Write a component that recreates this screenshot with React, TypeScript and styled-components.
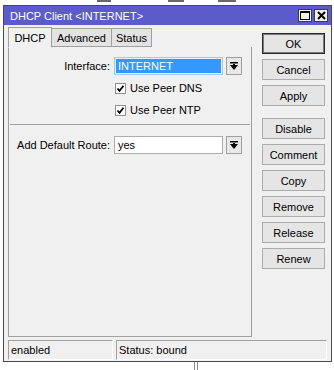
import styled, { createGlobalStyle } from "styled-components";

const GlobalStyle = createGlobalStyle`
  html, body {
    margin: 0;
    padding: 0;
    background: #ffffff;
  }
  body {
    font-family: "Liberation Sans", Arial, sans-serif;
    font-size: 11px;
    color: #000;
  }
`;

const Page = styled.div`
  width: 334px;
  height: 370px;
  padding: 0 2px 0 3px;
  box-sizing: border-box;
  overflow: hidden;
`;

// fragments of the grid behind the window
const BackStrip = styled.div`
  height: 5px;
  display: flex;
  align-items: flex-start;
`;

const BackMark = styled.div<{ $left: number; $w: number }>`
  margin-left: ${(p) => p.$left}px;
  width: ${(p) => p.$w}px;
  height: 2px;
  background: #6a6a6a;
`;

const Window = styled.div`
  width: 329px;
  height: 357px;
  box-sizing: border-box;
  border: 1px solid #4a4a4a;
  background: #f0f0f0;
  display: flex;
  flex-direction: column;
`;

const TitleBar = styled.div`
  height: 19px;
  flex: none;
  background: #5b5bc9;
  color: #fff;
  display: flex;
  align-items: center;
  padding: 0 3px 0 6px;
  font-size: 11px;
`;

const Title = styled.div`
  flex: 1;
`;

const TitleButtons = styled.div`
  display: flex;
  gap: 2px;
`;

const TitleButton = styled.div`
  width: 14px;
  height: 13px;
  box-sizing: border-box;
  background: #f0f0f0;
  border: 1px solid #3c3c3c;
  display: flex;
  align-items: center;
  justify-content: center;
`;

const Main = styled.div`
  height: 312px;
  flex: none;
  display: flex;
  padding: 3px 6px 0 4px;
  box-sizing: border-box;
  gap: 10px;
`;

const LeftColumn = styled.div`
  width: 244px;
  display: flex;
  flex-direction: column;
`;

const TabRow = styled.div`
  height: 19px;
  display: flex;
  align-items: flex-end;
  position: relative;
  z-index: 1;
`;

const Tab = styled.div<{ $active?: boolean; $w: number }>`
  width: ${(p) => p.$w}px;
  height: ${(p) => (p.$active ? 21 : 19)}px;
  box-sizing: border-box;
  border: 1px solid #a0a0a0;
  border-bottom: ${(p) => (p.$active ? "1px solid #f0f0f0" : "1px solid #a0a0a0")};
  border-left: ${(p) => (p.$active ? "1px solid #a0a0a0" : "none")};
  background: ${(p) => (p.$active ? "#f0f0f0" : "#e3e3e3")};
  display: flex;
  align-items: center;
  justify-content: center;
  margin-bottom: ${(p) => (p.$active ? "-1px" : "0")};
  font-size: 11px;
`;

const Panel = styled.div`
  flex: 1;
  border: 1px solid #a0a0a0;
  border-top: none;
  box-sizing: border-box;
  padding-top: 10px;
  display: flex;
  flex-direction: column;
  gap: 4px;
`;

const FormRow = styled.div`
  display: grid;
  grid-template-columns: 105px 1fr;
  align-items: center;
  height: 18px;
`;

const Label = styled.div`
  text-align: right;
  padding-right: 4px;
  white-space: nowrap;
`;

const FieldWrap = styled.div`
  display: flex;
  gap: 3px;
`;

const Input = styled.div<{ $selected?: boolean }>`
  width: 109px;
  height: 18px;
  box-sizing: border-box;
  border: 1px solid ${(p) => (p.$selected ? "#a6c8ee" : "#abadb3")};
  background: ${(p) => (p.$selected ? "#3399ff" : "#fff")};
  color: ${(p) => (p.$selected ? "#fff" : "#000")};
  box-shadow: ${(p) => (p.$selected ? "inset 0 0 0 1px #e6f0fb" : "none")};
  padding-left: 3px;
  display: flex;
  align-items: center;
  font-size: 11px;
`;

const DropButton = styled.div`
  width: 16px;
  height: 18px;
  box-sizing: border-box;
  border: 1px solid #a0a0a0;
  background: #e8e8e8;
  display: flex;
  align-items: center;
  justify-content: center;
`;

const CheckRow = styled.label`
  display: flex;
  align-items: center;
  gap: 4px;
  padding-left: 1px;
`;

const CheckBox = styled.div`
  width: 11px;
  height: 11px;
  box-sizing: border-box;
  border: 1px solid #8f8f8f;
  background: #fff;
  display: flex;
  align-items: center;
  justify-content: center;
`;

const Separator = styled.div`
  height: 1px;
  background: #a0a0a0;
  margin: 1px 1px 7px 1px;
`;

const ButtonColumn = styled.div`
  width: 63px;
  padding-top: 5px;
  display: flex;
  flex-direction: column;
  gap: 5px;
`;

const ActionButton = styled.div<{ $default?: boolean; $spaced?: boolean }>`
  height: 21px;
  box-sizing: border-box;
  border: 1px solid ${(p) => (p.$default ? "#2b2b2b" : "#acacac")};
  box-shadow: ${(p) => (p.$default ? "inset 0 0 0 1px #7a7a7a" : "none")};
  background: #e5e5e5;
  display: flex;
  align-items: center;
  justify-content: center;
  font-size: 11px;
  margin-top: ${(p) => (p.$spaced ? "7px" : "0")};
`;

const StatusBar = styled.div`
  height: 20px;
  flex: none;
  margin-top: 3px;
  padding: 0 4px;
  display: flex;
  gap: 3px;
`;

const StatusCell = styled.div<{ $w: number }>`
  width: ${(p) => p.$w}px;
  box-sizing: border-box;
  border-top: 1px solid #a0a0a0;
  border-left: 1px solid #a0a0a0;
  border-bottom: 1px solid #ffffff;
  border-right: 1px solid #ffffff;
  padding-left: 2px;
  display: flex;
  align-items: center;
  font-size: 11px;
`;

const BelowLine = styled.div`
  margin-left: 191px;
  width: 2px;
  height: 10px;
  border-left: 1px solid #8a8a8a;
  border-right: 1px solid #8a8a8a;
`;

const DropIcon = () => (
  <svg width="8" height="9" viewBox="0 0 8 9">
    <rect x="0" y="0" width="8" height="1.5" fill="#000" />
    <polygon points="0,3 8,3 4,8" fill="#000" />
    <rect x="3" y="2" width="2" height="2" fill="#000" />
  </svg>
);

const CheckMark = () => (
  <svg width="9" height="9" viewBox="0 0 9 9">
    <path d="M1.5 4.5 L3.5 6.8 L7.5 1.8" stroke="#000" strokeWidth="1.8" fill="none" />
  </svg>
);

const buttons = ["Cancel", "Apply", "Disable", "Comment", "Copy", "Remove", "Release", "Renew"];

export default function App() {
  return (
    <Page>
      <GlobalStyle />
      <BackStrip>
        <BackMark $left={94} $w={14} />
        <BackMark $left={57} $w={16} />
        <BackMark $left={34} $w={18} />
      </BackStrip>
      <Window>
        <TitleBar>
          <Title>DHCP Client &lt;INTERNET&gt;</Title>
          <TitleButtons>
            <TitleButton>
              <svg width="10" height="9" viewBox="0 0 10 9">
                <rect x="0.5" y="0.5" width="9" height="8" stroke="#000" fill="none" />
                <rect x="0.5" y="0.5" width="9" height="1.5" fill="#000" />
              </svg>
            </TitleButton>
            <TitleButton>
              <svg width="9" height="9" viewBox="0 0 9 9">
                <path d="M1 1 L8 8 M8 1 L1 8" stroke="#000" strokeWidth="2" />
              </svg>
            </TitleButton>
          </TitleButtons>
        </TitleBar>
        <Main>
          <LeftColumn>
            <TabRow>
              <Tab $active $w={44}>DHCP</Tab>
              <Tab $w={60}>Advanced</Tab>
              <Tab $w={40}>Status</Tab>
            </TabRow>
            <Panel>
              <FormRow>
                <Label>Interface:</Label>
                <FieldWrap>
                  <Input $selected>INTERNET</Input>
                  <DropButton>
                    <DropIcon />
                  </DropButton>
                </FieldWrap>
              </FormRow>
              <FormRow>
                <span />
                <CheckRow>
                  <CheckBox>
                    <CheckMark />
                  </CheckBox>
                  Use Peer DNS
                </CheckRow>
              </FormRow>
              <FormRow>
                <span />
                <CheckRow>
                  <CheckBox>
                    <CheckMark />
                  </CheckBox>
                  Use Peer NTP
                </CheckRow>
              </FormRow>
              <Separator />
              <FormRow>
                <Label>Add Default Route:</Label>
                <FieldWrap>
                  <Input>yes</Input>
                  <DropButton>
                    <DropIcon />
                  </DropButton>
                </FieldWrap>
              </FormRow>
            </Panel>
          </LeftColumn>
          <ButtonColumn>
            <ActionButton $default>OK</ActionButton>
            {buttons.map((b) => (
              <ActionButton key={b} $spaced={b === "Disable"}>
                {b}
              </ActionButton>
            ))}
          </ButtonColumn>
        </Main>
        <StatusBar>
          <StatusCell $w={105}>enabled</StatusCell>
          <StatusCell $w={211}>Status: bound</StatusCell>
        </StatusBar>
      </Window>
      <BelowLine />
    </Page>
  );
}
